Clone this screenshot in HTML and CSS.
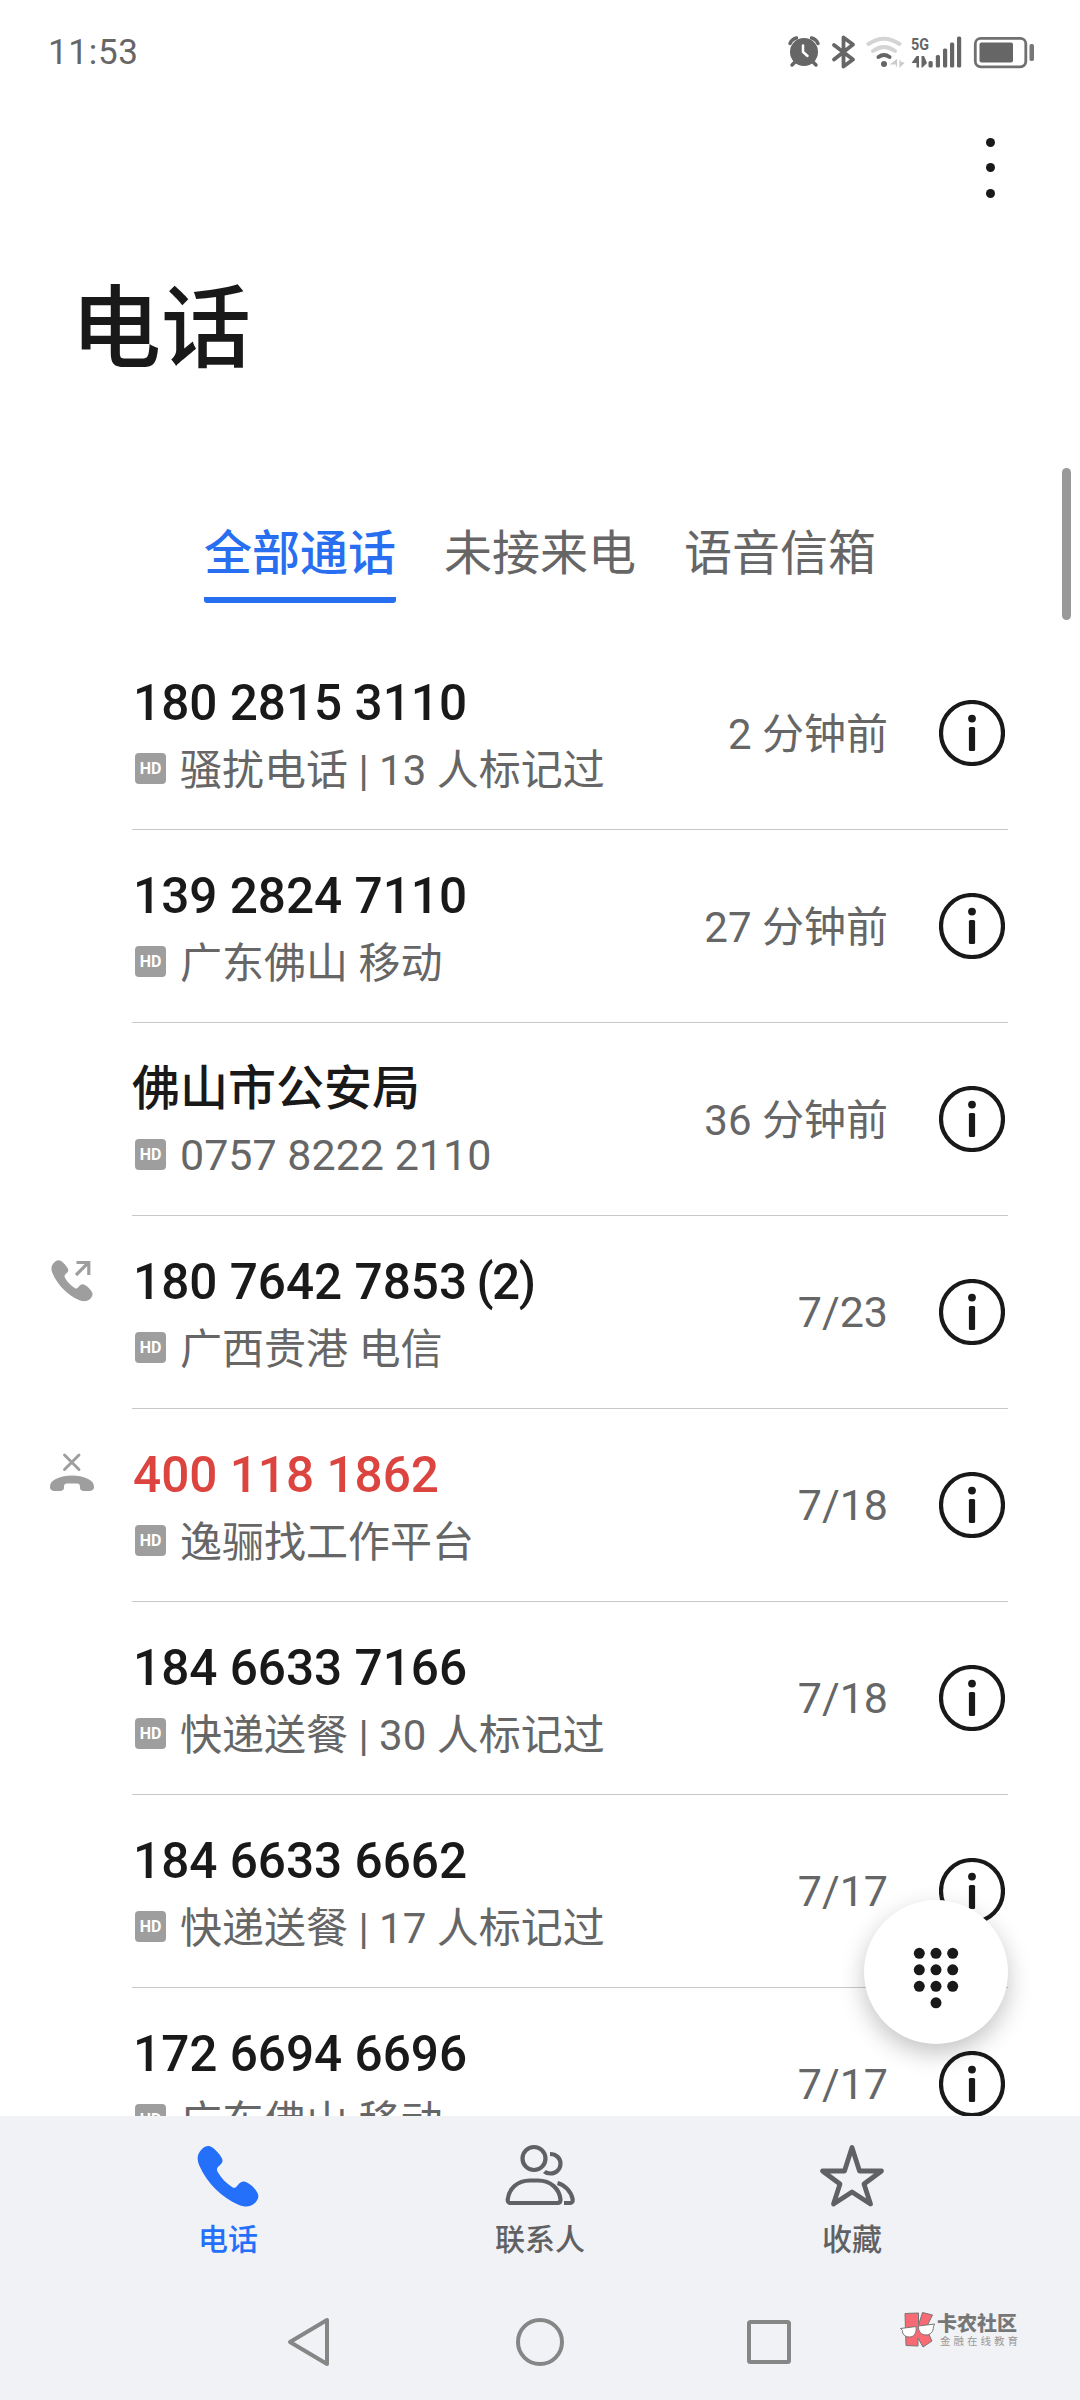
FILE: index.html
```html
<!DOCTYPE html>
<html lang="zh-CN">
<head>
    <meta charset="UTF-8">
    <meta name="viewport" content="width=device-width, initial-scale=1.0">
    <title>电话</title>
    <link rel="stylesheet" href="styles.css">
</head>
<body>
    <!-- Shared icons -->
    <svg class="sprite">
        <symbol id="info" viewBox="0 0 66 66">
            <circle cx="33" cy="33" r="31" fill="none" stroke="currentColor" stroke-width="4.2"/>
            <circle cx="33" cy="18.6" r="3.9" fill="currentColor"/>
            <rect x="29.9" y="27" width="6.2" height="24" rx="1.5" fill="currentColor"/>
        </symbol>
        <symbol id="handset" viewBox="0 0 62 62">
            <path fill="currentColor" d="M5 4 C8 0.500 12.500 0 15.500 2.500 C19.500 5.500 23 9.500 25 13.500 C26.500 17 24.500 19 22 21 C19.500 23 19.500 25 21 27.500 C24.500 33.500 29.500 38.500 35 42 C37.500 43.500 38.500 43 40.500 40.500 C43.500 36.500 46.500 35.500 50 37.500 C54 39.500 58 43.500 60.500 48 C62 51 61.500 54 58.500 57.500 C54 62 48.500 62.500 42 60 C25 53 10 38 2.500 21 C-0.500 14 0 9 5 4 Z"/>
        </symbol>
    </svg>

    <div class="phone">
        <header>
            <div class="status-bar">
                <span class="clock">11:53</span>
                <svg class="status-icons" width="250" height="36" viewBox="786 34 250 36">
                    <!-- Alarm -->
                    <g fill="#666" stroke="#666" stroke-linecap="round">
                        <circle cx="804" cy="52" r="14" stroke="none"/>
                        <path d="M790 43.500 Q792 39 796.500 38 M818 43.500 Q816 39 811.500 38" fill="none" stroke-width="3.500"/>
                        <path d="M795 62 L792 65 M813 62 L816 65" stroke-width="3.500"/>
                        <path d="M803 45.500 V52 L807.500 56" fill="none" stroke="#fff" stroke-width="2.500"/>
                    </g>
                    <!-- Bluetooth -->
                    <path d="M834 45 L853 59.500 L843.500 66.500 V37.500 L853 44.500 L834 59.500" fill="none" stroke="#666" stroke-width="3.800" stroke-linejoin="round" stroke-linecap="round"/>
                    <!-- Wifi -->
                    <g fill="none" stroke-width="4" stroke-linecap="round">
                        <path d="M868.500 44 Q884 33.500 899.500 44" stroke="#d4d4d4"/>
                        <path d="M873 51 Q884 43 895 51" stroke="#d4d4d4"/>
                        <path d="M878.500 57 Q884 53 889.500 57" stroke="#666"/>
                        <circle cx="884" cy="64" r="3" fill="#666" stroke="none"/>
                        <path d="M896.500 60 V66.500 L896.500 64 H891.500 Z M900 66.500 V60 L900 62 L903.500 63 Z" stroke="#ccc" fill="#ccc" stroke-width="1.200"/>
                    </g>
                    <!-- 5G signal -->
                    <text class="net" x="911" y="50.300" textLength="18" lengthAdjust="spacingAndGlyphs">5G</text>
                    <g fill="#666">
                        <path d="M916.500 56 H919 V67.500 H916.500 V63 H911.500 Z M921.500 56 H924 L927 63 L922.500 67.500 H921.500 Z"/>
                        <rect x="928.500" y="61" width="4.200" height="6.500" rx="1.500"/>
                        <rect x="935.800" y="55" width="4.200" height="12.500" rx="1.500"/>
                        <rect x="943" y="48.500" width="4.200" height="19" rx="1.500"/>
                        <rect x="950" y="42.500" width="4.200" height="25" rx="1.500"/>
                        <rect x="957" y="36.500" width="4.200" height="31" rx="1.500"/>
                    </g>
                    <!-- Battery -->
                    <rect x="975.300" y="38.300" width="50.500" height="28.500" rx="5.500" fill="none" stroke="#707070" stroke-width="2.800"/>
                    <rect x="979.500" y="42.500" width="33.500" height="20" rx="2" fill="#666"/>
                    <rect x="1029.500" y="44" width="4.500" height="17" rx="1.800" fill="#777"/>
                </svg>
            </div>
            <div class="menu"><i></i><i></i><i></i></div>
            <h1>电话</h1>
        </header>

        <nav class="tabs">
            <span class="tab active">全部通话</span>
            <span class="tab">未接来电</span>
            <span class="tab">语音信箱</span>
        </nav>
        <div class="scrollbar"></div>

        <main class="calls">
            <div class="call">
                <div class="type"></div>
                <div class="row">
                    <div class="who">
                        <div class="number">180 2815 3110</div>
                        <div class="detail"><b class="hd">HD</b><span class="marked">骚扰电话 | 13 人标记过</span></div>
                    </div>
                    <div class="time ago">2 分钟前</div>
                    <svg class="info"><use href="#info"/></svg>
                </div>
            </div>
            <div class="call">
                <div class="type"></div>
                <div class="row">
                    <div class="who">
                        <div class="number">139 2824 7110</div>
                        <div class="detail"><b class="hd">HD</b><span>广东佛山 移动</span></div>
                    </div>
                    <div class="time ago">27 分钟前</div>
                    <svg class="info"><use href="#info"/></svg>
                </div>
            </div>
            <div class="call">
                <div class="type"></div>
                <div class="row">
                    <div class="who">
                        <div class="number name">佛山市公安局</div>
                        <div class="detail"><b class="hd">HD</b><span class="digits">0757 8222 2110</span></div>
                    </div>
                    <div class="time ago">36 分钟前</div>
                    <svg class="info"><use href="#info"/></svg>
                </div>
            </div>
            <div class="call">
                <div class="type">
                    <svg width="44" height="44" viewBox="0 0 44 44">
                        <use href="#handset" x="1" y="1.500" width="42" height="42"/>
                        <path d="M26 17 L38 5 M26.500 4.500 H38.800 V17" fill="none" stroke="currentColor" stroke-width="3.200"/>
                    </svg>
                </div>
                <div class="row">
                    <div class="who">
                        <div class="number">180 7642 7853 <span class="count">(2)</span></div>
                        <div class="detail"><b class="hd">HD</b><span>广西贵港 电信</span></div>
                    </div>
                    <div class="time">7/23</div>
                    <svg class="info"><use href="#info"/></svg>
                </div>
            </div>
            <div class="call missed">
                <div class="type">
                    <svg width="44" height="44" viewBox="0 0 44 44">
                        <path d="M14.500 4 L29 18.500 M29 4 L14.500 18.500" fill="none" stroke="currentColor" stroke-width="2.900" stroke-linecap="round"/>
                        <path fill="currentColor" d="M22 24.500 C33 24.500 44 28.500 44 35.500 C44 39 42 40 38.500 40 H35 C31 40 30 38.500 30 36.500 C30 33.500 29.500 32.500 27 32.500 H17 C14.500 32.500 14 33.500 14 36.500 C14 38.500 13 40 9 40 H5.500 C2 40 0 39 0 35.500 C0 28.500 11 24.500 22 24.500 Z"/>
                    </svg>
                </div>
                <div class="row">
                    <div class="who">
                        <div class="number">400 118 1862</div>
                        <div class="detail"><b class="hd">HD</b><span>逸骊找工作平台</span></div>
                    </div>
                    <div class="time">7/18</div>
                    <svg class="info"><use href="#info"/></svg>
                </div>
            </div>
            <div class="call">
                <div class="type"></div>
                <div class="row">
                    <div class="who">
                        <div class="number">184 6633 7166</div>
                        <div class="detail"><b class="hd">HD</b><span class="marked">快递送餐 | 30 人标记过</span></div>
                    </div>
                    <div class="time">7/18</div>
                    <svg class="info"><use href="#info"/></svg>
                </div>
            </div>
            <div class="call">
                <div class="type"></div>
                <div class="row">
                    <div class="who">
                        <div class="number">184 6633 6662</div>
                        <div class="detail"><b class="hd">HD</b><span class="marked">快递送餐 | 17 人标记过</span></div>
                    </div>
                    <div class="time">7/17</div>
                    <svg class="info"><use href="#info"/></svg>
                </div>
            </div>
            <div class="call">
                <div class="type"></div>
                <div class="row">
                    <div class="who">
                        <div class="number">172 6694 6696</div>
                        <div class="detail"><b class="hd">HD</b><span>广东佛山 移动</span></div>
                    </div>
                    <div class="time">7/17</div>
                    <svg class="info"><use href="#info"/></svg>
                </div>
            </div>
        </main>

        <!-- Dial pad button -->
        <div class="dial">
            <svg width="46" height="62" viewBox="0 0 46 62" fill="#191919">
                <circle cx="6.300" cy="6.300" r="5.500"/><circle cx="23" cy="6.300" r="5.500"/><circle cx="39.700" cy="6.300" r="5.500"/>
                <circle cx="6.300" cy="22.800" r="5.500"/><circle cx="23" cy="22.800" r="5.500"/><circle cx="39.700" cy="22.800" r="5.500"/>
                <circle cx="6.300" cy="39.300" r="5.500"/><circle cx="23" cy="39.300" r="5.500"/><circle cx="39.700" cy="39.300" r="5.500"/>
                <circle cx="23" cy="55.800" r="5.500"/>
            </svg>
        </div>

        <footer>
            <nav class="bottom-tabs">
                <div class="bottom-tab active">
                    <svg width="72" height="72" viewBox="0 0 72 72"><use href="#handset" x="5" y="5" width="62" height="62"/></svg>
                    <span>电话</span>
                </div>
                <div class="bottom-tab">
                    <svg width="72" height="72" viewBox="0 0 72 72" fill="none" stroke="currentColor" stroke-width="4.200" stroke-linejoin="round">
                        <circle cx="30" cy="18.500" r="11.500"/>
                        <path d="M26 40.500 H34 C47 40.500 55.500 49 56.500 59.500 Q56.500 63 53.500 63 H7 Q3.500 63 3.700 59.500 C5 49 13 40.500 26 40.500 Z"/>
                        <path d="M46 14 C52.500 14 56.500 18.500 56.500 23.500 C56.500 29.500 52 33.500 46.500 33.500 C44 33.500 42 33 40.500 31.500"/>
                        <path d="M53.500 43 C61 45 67.500 52 68.700 59.500 Q69 63 65.500 63 H60"/>
                    </svg>
                    <span>联系人</span>
                </div>
                <div class="bottom-tab">
                    <svg width="72" height="72" viewBox="0 0 72 72" fill="none" stroke="currentColor" stroke-width="4.800" stroke-linejoin="round">
                        <path d="M36 7.500 L43.500 31 H65.500 L48 44 L54.500 64 L36 52 L17.500 64 L24 44 L6.500 31 H28.500 Z"/>
                    </svg>
                    <span>收藏</span>
                </div>
            </nav>
            <div class="system-nav">
                <svg width="50" height="50" viewBox="0 0 50 50"><path d="M41 3 V47 L4 25 Z"/></svg>
                <svg width="50" height="50" viewBox="0 0 50 50"><circle cx="25" cy="25" r="22"/></svg>
                <svg width="50" height="50" viewBox="0 0 50 50"><rect x="5" y="5" width="40" height="40" rx="1.500"/></svg>
            </div>
        </footer>

        <!-- Community watermark -->
        <div class="watermark">
            <svg width="36" height="36" viewBox="0 0 36 36" stroke="#777" stroke-width="1" stroke-linejoin="round">
                <path fill="#f86a74" d="M5 1.500 L18.500 1 V13 L22.500 0.500 L32.500 3 L26 16 L32 29 L23 35 L18 26 V34 L6 33.500 Z"/>
                <path fill="#fff" d="M0.500 16.500 L16 14.500 C17 21 14 25 9.500 25 C5 25 2 22 2.500 18.500 Z M18.500 14 L34.500 12 L33.500 14.500 C33.500 20 30 23 26 23 C21 23 18 19 18.500 14 Z"/>
            </svg>
            <div class="brand">
                <strong>卡农社区</strong>
                <small>金融在线教育</small>
            </div>
        </div>
    </div>
</body>
</html>
```
FILE: styles.css
```css
* {
    box-sizing: border-box;
}

body {
    margin: 0;
    background: #fff;
    color: #191919;
    font-family: Roboto, "Noto Sans CJK SC", sans-serif;
}

.sprite {
    display: none;
}

.phone {
    position: relative;
    display: flex;
    flex-direction: column;
    width: 1080px;
    height: 2400px;
    overflow: hidden;
}

/* Header */
header {
    height: 493px;
    flex: none;
}

.status-bar {
    display: flex;
    justify-content: space-between;
    align-items: center;
    height: 104px;
    padding: 0 44px 0 48px;
}

.clock {
    font-size: 35px;
    letter-spacing: 0.7px;
    color: #666;
}

.net {
    font-size: 17px;
    font-weight: 700;
    fill: #666;
}

.menu {
    display: flex;
    flex-direction: column;
    align-items: flex-end;
    gap: 16.5px;
    padding: 33.5px 85.5px 0 0;
}

.menu i {
    width: 9px;
    height: 9px;
    border-radius: 50%;
    background: #191919;
}

h1 {
    margin: 72px 0 0 71px;
    font-size: 90px;
    line-height: 120px;
    font-weight: 500;
}

/* Call filter tabs */
.tabs {
    display: flex;
    justify-content: center;
    gap: 48px;
    height: 144px;
    flex: none;
    padding-top: 24px;
}

.tab {
    height: 86px;
    font-size: 48px;
    line-height: 73px;
    color: #666;
}

.tab.active {
    color: #276ff0;
    font-weight: 500;
    border-bottom: 6px solid #276ff0;
    border-radius: 3px;
}

.scrollbar {
    position: absolute;
    top: 468px;
    right: 9px;
    width: 9px;
    height: 152px;
    border-radius: 5px;
    background: #999;
}

/* Call list */
.calls {
    height: 1479px;
    flex: none;
    overflow: hidden;
}

.call {
    display: flex;
    height: 193px;
}

.type {
    width: 132px;
    padding: 42px 0 0 50px;
    color: #9e9e9e;
}

.row {
    display: flex;
    align-items: center;
    width: 876px;
    border-bottom: 1px solid #c8c8c8;
}

.who {
    flex: 1;
}

.number {
    padding-left: 1px;
    font-size: 49.5px;
    line-height: 66px;
    font-weight: 500;
}

.number.name {
    padding-left: 0;
    font-size: 48px;
}

.count {
    letter-spacing: -1.5px;
    margin-left: -3px;
}

.missed .number {
    color: #dc4440;
}

.detail {
    display: flex;
    align-items: center;
    height: 60px;
    padding-left: 3px;
    font-size: 42px;
    color: #666;
    white-space: nowrap;
}

.hd {
    width: 31px;
    height: 31px;
    margin: 5px 14px 0 0;
    border-radius: 4px;
    background: #9e9e9e;
    color: #fff;
    font-size: 16px;
    line-height: 31px;
    text-align: center;
}

.digits {
    padding-top: 5px;
    font-size: 43px;
}

.time {
    font-size: 43px;
    color: #666;
}

.time.ago {
    padding-bottom: 6px;
    font-size: 42px;
}

.info {
    width: 66px;
    height: 66px;
    margin: 0 3px 0 51px;
}

.dial {
    position: absolute;
    left: 864px;
    top: 1900px;
    display: flex;
    justify-content: center;
    align-items: center;
    width: 144px;
    height: 144px;
    padding-top: 12px;
    border-radius: 50%;
    background: #fff;
    box-shadow: 0 9px 24px rgba(0, 0, 0, 0.24);
}

/* Bottom bar */
footer {
    position: relative;
    flex: 1;
    background: #f1f2f6;
}

.bottom-tabs {
    display: flex;
    padding: 24px 72px 0;
}

.bottom-tab {
    flex: 1;
    display: flex;
    flex-direction: column;
    align-items: center;
    color: #606163;
    font-size: 30px;
    line-height: 40px;
    font-weight: 500;
}

.bottom-tab span {
    margin-top: 8px;
}

.bottom-tab.active {
    color: #2470fa;
}

.system-nav {
    display: flex;
    justify-content: center;
    gap: 179px;
    margin-top: 57px;
    fill: none;
    stroke: #868686;
    stroke-width: 4;
    stroke-linejoin: round;
}

.watermark {
    position: absolute;
    left: 900px;
    top: 2312px;
    display: flex;
    gap: 1px;
}

.brand {
    display: flex;
    flex-direction: column;
    padding-top: 1px;
    color: #777;
}

.brand strong {
    font-size: 20px;
    line-height: 22px;
    font-weight: 900;
}

.brand small {
    padding-left: 3px;
    font-size: 10.5px;
    line-height: 13px;
    letter-spacing: 3px;
    color: #999;
}
```
